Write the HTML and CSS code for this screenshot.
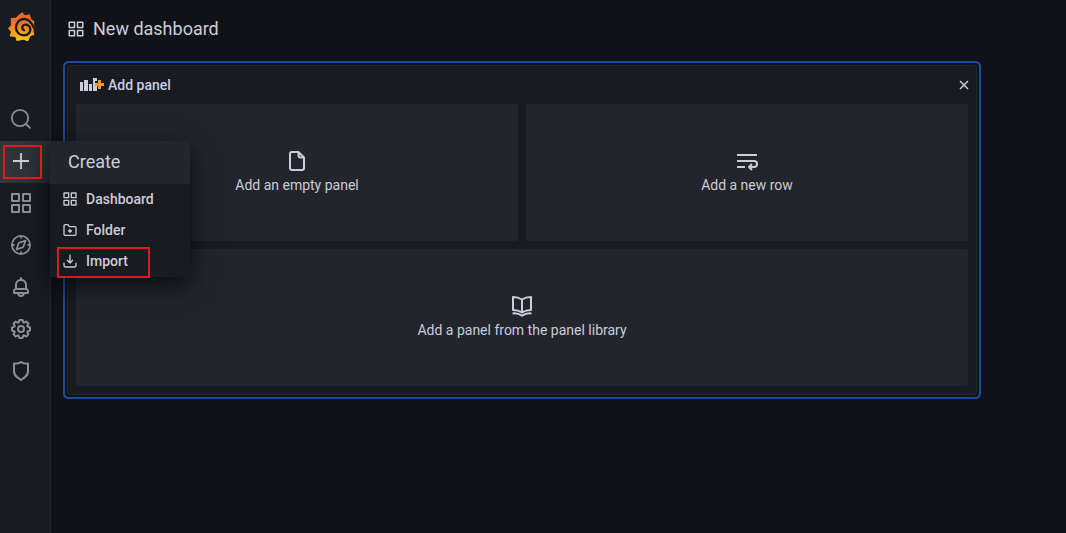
FILE: index.html
```html
<!DOCTYPE html>
<html lang="en">
<head>
  <meta charset="UTF-8">
  <meta name="viewport" content="width=device-width, initial-scale=1.0">
  <title>New dashboard</title>
  <link rel="stylesheet" href="styles.css">
</head>
<body>
  <!-- shared icon shapes -->
  <svg class="sprite" aria-hidden="true">
    <symbol id="apps" viewBox="0 0 24 24">
      <path d="M10,13H3a1,1,0,0,0-1,1v7a1,1,0,0,0,1,1h7a1,1,0,0,0,1-1V14A1,1,0,0,0,10,13ZM9,20H4V15H9ZM21,2H14a1,1,0,0,0-1,1v7a1,1,0,0,0,1,1h7a1,1,0,0,0,1-1V3A1,1,0,0,0,21,2ZM20,9H15V4h5Zm1,4H14a1,1,0,0,0-1,1v7a1,1,0,0,0,1,1h7a1,1,0,0,0,1-1V14A1,1,0,0,0,21,13Zm-1,7H15V15h5ZM10,2H3A1,1,0,0,0,2,3v7a1,1,0,0,0,1,1h7a1,1,0,0,0,1-1V3A1,1,0,0,0,10,2ZM9,9H4V4H9Z"/>
    </symbol>
  </svg>

  <div class="app">
    <nav class="sidebar">
      <a class="logo" href="#" aria-label="Home">
        <svg viewBox="0 0 84 90">
          <defs>
            <linearGradient id="flame" x1="0" y1="0" x2="0" y2="1">
              <stop offset="0" stop-color="#f05a28"/>
              <stop offset="0.4" stop-color="#f5762b"/>
              <stop offset="1" stop-color="#fbca0a"/>
            </linearGradient>
          </defs>
          <path fill="url(#flame)" d="M43 1 L51 10 L66 7 L69 20 L80 29 L77 37 L82 46 L76 56 L79 68 L67 73 L60 88 L46 83 L26 87 L22 75 L5 73 L9 59 L0 49 L9 40 L8 18 L24 17 L32 8 Z"/>
          <path class="swirl" d="M84 54 C74 50 74 23 50 21 C34 20 24 33 24 47 C24 61 35 70 48 70 C60 70 68 61 67 51 C66 42 58 37 51 38 C44 39 41 46 44 51 C46 54 49 55 51 54"/>
        </svg>
      </a>

      <ul class="nav-list">
        <li>
          <a class="nav-link" href="#" aria-label="Search">
            <svg class="icon-lg" viewBox="0 0 24 24"><g class="line"><circle cx="11" cy="11" r="8.2"/><path d="M17 17l4.4 4.4"/></g></svg>
          </a>
        </li>
        <li class="active">
          <a class="nav-link" href="#" aria-label="Create">
            <svg class="icon-lg" viewBox="0 0 24 24"><path class="line" d="M12 4v16M4 12h16"/></svg>
          </a>
          <span class="marker marker-plus"></span>
          <div class="menu">
            <a class="menu-header" href="#">Create</a>
            <a class="menu-item" href="#"><svg class="icon-sm"><use href="#apps"/></svg>Dashboard</a>
            <a class="menu-item" href="#">
              <svg class="icon-sm" viewBox="0 0 24 24"><path class="line" d="M3 5.500a1.500 1.500 0 0 1 1.500-1.500H9l2 3h8.500a1.500 1.500 0 0 1 1.500 1.500v10a1.500 1.500 0 0 1-1.500 1.500h-15a1.500 1.500 0 0 1-1.500-1.500zM12 10.500v6M9 13.500h6"/></svg>Folder
            </a>
            <a class="menu-item" href="#">
              <svg class="icon-sm" viewBox="0 0 24 24"><path class="line" d="M12 2.500v12M7.500 10.500l4.500 4.500 4.500-4.500M3 14.500v4a2.500 2.500 0 0 0 2.500 2.500h13a2.500 2.500 0 0 0 2.500-2.500v-4"/></svg>Import
              <span class="marker marker-import"></span>
            </a>
          </div>
        </li>
        <li>
          <a class="nav-link" href="#" aria-label="Dashboards"><svg class="icon-lg"><use href="#apps"/></svg></a>
        </li>
        <li>
          <a class="nav-link" href="#" aria-label="Explore">
            <svg class="icon-lg" viewBox="0 0 24 24"><g class="line"><circle cx="12" cy="12" r="9.100"/><path d="M12 3v2.500M12 18.500V21M3 12h2.500M18.500 12H21M16.500 7.500l-2.300 6.700-6.700 2.300 2.300-6.700z"/></g></svg>
          </a>
        </li>
        <li>
          <a class="nav-link" href="#" aria-label="Alerting">
            <svg class="icon-lg" viewBox="0 0 24 24"><path d="M18,13.180V10a6,6,0,0,0-5-5.910V3a1,1,0,0,0-2,0V4.090A6,6,0,0,0,6,10v3.180A3,3,0,0,0,4,16v2a1,1,0,0,0,1,1H8.140a4,4,0,0,0,7.720,0H19a1,1,0,0,0,1-1V16A3,3,0,0,0,18,13.180ZM8,10a4,4,0,0,1,8,0v3H8Zm4,10a2,2,0,0,1-1.720-1h3.440A2,2,0,0,1,12,20Zm6-3H6V16a1,1,0,0,1,1-1H17a1,1,0,0,1,1,1Z"/></svg>
          </a>
        </li>
        <li>
          <a class="nav-link" href="#" aria-label="Configuration">
            <svg class="icon-lg" viewBox="0 0 24 24"><path d="M21.320,9.550l-1.890-.630.890-1.780A1,1,0,0,0,20.130,6L18,3.870a1,1,0,0,0-1.150-.190l-1.780.890-.630-1.890A1,1,0,0,0,13.500,2h-3a1,1,0,0,0-.950.680L8.920,4.570,7.140,3.680A1,1,0,0,0,6,3.870L3.870,6a1,1,0,0,0-.190,1.150l.890,1.780-1.890.630A1,1,0,0,0,2,10.500v3a1,1,0,0,0,.680.950l1.890.630-.890,1.780A1,1,0,0,0,3.870,18L6,20.130a1,1,0,0,0,1.150.190l1.780-.890.630,1.890a1,1,0,0,0,.950.680h3a1,1,0,0,0,.950-.680l.630-1.890,1.780.890A1,1,0,0,0,18,20.130L20.130,18a1,1,0,0,0,.190-1.150l-.890-1.780,1.890-.630A1,1,0,0,0,22,13.500v-3A1,1,0,0,0,21.320,9.550ZM20,12.780l-1.200.400A2,2,0,0,0,17.640,16l.570,1.140-1.100,1.100L16,17.640a2,2,0,0,0-2.790,1.160l-.400,1.200H11.220l-.400-1.200A2,2,0,0,0,8,17.640l-1.140.570-1.100-1.100L6.360,16A2,2,0,0,0,5.200,13.180L4,12.780V11.220l1.200-.400A2,2,0,0,0,6.360,8L5.790,6.890l1.100-1.100L8,6.360A2,2,0,0,0,10.820,5.200l.400-1.200h1.560l.400,1.200A2,2,0,0,0,16,6.360l1.140-.570,1.100,1.100L17.640,8a2,2,0,0,0,1.160,2.790l1.200.400ZM12,8a4,4,0,1,0,4,4A4,4,0,0,0,12,8Zm0,6a2,2,0,1,1,2-2A2,2,0,0,1,12,14Z"/></svg>
          </a>
        </li>
        <li>
          <a class="nav-link" href="#" aria-label="Server admin">
            <svg class="icon-lg" viewBox="0 0 24 24"><path d="M19.630,3.650a1,1,0,0,0-.840-.200,8,8,0,0,1-6.220-1.270,1,1,0,0,0-1.140,0A8,8,0,0,1,5.210,3.450a1,1,0,0,0-.840.200A1,1,0,0,0,4,4.430v7.450a9,9,0,0,0,3.770,7.330l3.650,2.600a1,1,0,0,0,1.160,0l3.650-2.600A9,9,0,0,0,20,11.880V4.430A1,1,0,0,0,19.630,3.650ZM18,11.880a7,7,0,0,1-2.930,5.700L12,19.770,8.930,17.580A7,7,0,0,1,6,11.880V5.580a10,10,0,0,0,6-1.390,10,10,0,0,0,6,1.390Z"/></svg>
          </a>
        </li>
      </ul>
    </nav>

    <main class="content">
      <header class="toolbar">
        <svg class="icon-title"><use href="#apps"/></svg>
        <h1>New dashboard</h1>
      </header>

      <section class="add-panel">
        <div class="panel-header">
          <svg class="icon-panel" viewBox="0 0 24 16">
            <path d="M0 5h3v9H0zM4 3h4v11H4zM9 7h3v7H9zM13 1h4v3h-2v5h2v5h-4z"/>
            <path class="spark" d="M18 3h3v3h3v3h-3v3h-3V9h-3V6h3z"/>
          </svg>
          <h2>Add panel</h2>
          <button class="close" type="button" aria-label="Close">
            <svg viewBox="0 0 16 16"><path class="line" d="M4 4l8 8M12 4l-8 8"/></svg>
          </button>
        </div>
        <div class="tiles">
          <button class="tile" type="button">
            <svg class="icon-lg" viewBox="0 0 24 24"><path class="line" d="M13.500 3H7a2 2 0 0 0-2 2v14a2 2 0 0 0 2 2h10a2 2 0 0 0 2-2V8.500zM13.500 3v3.500a2 2 0 0 0 2 2H19"/></svg>
            Add an empty panel
          </button>
          <button class="tile" type="button">
            <svg class="icon-lg" viewBox="0 0 24 24"><path class="line" d="M2 6h20M2 12h17a2.500 2.500 0 0 1 0 6h-4M2 18h8M17 15l-3 3 3 3"/></svg>
            Add a new row
          </button>
          <button class="tile tile-wide" type="button">
            <svg class="icon-lg" viewBox="0 0 24 24"><path class="line" d="M12 5.500C9 3.500 6 3 3 3v13c3 0 6 .500 9 2.500 3-2 6-2.500 9-2.500V3c-3 0-6 .500-9 2.500zM12 5.500v13M2.500 19.500c3.500-.500 6.500.200 9.500 2.200 3-2 6-2.700 9.500-2.200"/></svg>
            Add a panel from the panel library
          </button>
        </div>
      </section>
    </main>
  </div>
</body>
</html>
```
FILE: styles.css
```css
* {
  box-sizing: border-box;
}

body {
  margin: 0;
  background: #111217;
  color: #ccccdc;
  font-family: Roboto, "Liberation Sans", sans-serif;
  font-size: 14px;
  line-height: 20px;
}

a {
  color: inherit;
  text-decoration: none;
}

h1,
h2 {
  margin: 0;
  font-weight: 500;
}

svg {
  display: block;
  flex: none;
  fill: currentColor;
}

.sprite {
  position: absolute;
  width: 0;
  height: 0;
}

.line {
  fill: none;
  stroke: currentColor;
  stroke-width: 2;
  stroke-linejoin: round;
}

.icon-sm {
  width: 16px;
  height: 16px;
}

.icon-title {
  width: 18px;
  height: 18px;
}

.icon-lg {
  width: 24px;
  height: 24px;
}

.app {
  display: flex;
  min-height: 100vh;
}

/* sidebar */
.sidebar {
  flex: none;
  width: 51px;
  background: #181b1f;
  border-right: 1px solid #25272c;
}

.logo {
  display: block;
  height: 99px;
  padding: 12px 0 0 8px;
}

.logo svg {
  width: 28px;
  height: 30px;
}

.swirl {
  fill: none;
  stroke: #181b1f;
  stroke-width: 7;
}

.nav-list {
  list-style: none;
  margin: 0;
  padding: 0;
}

.nav-list li {
  position: relative;
}

.nav-link {
  display: flex;
  align-items: center;
  height: 42px;
  padding: 0 0 2px 9px;
  color: #8e8e9b;
}

.nav-link .line {
  stroke-width: 1.8;
}

.active > .nav-link {
  background: linear-gradient(90deg, #33363b, #2b2e33);
  color: #ccccdc;
}

/* create menu */
.menu {
  position: absolute;
  top: 0;
  left: 50px;
  z-index: 1;
  width: 140px;
  background: #181b1f;
  box-shadow: 0 8px 24px rgba(1, 4, 9, 0.75);
}

.menu-header {
  display: block;
  padding: 10px 18px 12px;
  background: #22252b;
  font-size: 18px;
  line-height: 21px;
}

.menu-item {
  position: relative;
  display: flex;
  align-items: center;
  gap: 8px;
  height: 31px;
  padding: 0 0 2px 12px;
  font-weight: 500;
}

.marker {
  position: absolute;
  z-index: 2;
  border: 2px solid #e0191f;
}

.marker-plus {
  inset: 4px 8px 4px 3px;
}

.marker-import {
  inset: 1px 40px -1px 7px;
}

/* dashboard */
.content {
  flex: 1;
  min-width: 0;
  padding: 0 16px;
}

.toolbar {
  display: flex;
  align-items: center;
  gap: 8px;
  height: 65px;
  padding-bottom: 8px;
}

.toolbar h1 {
  font-size: 18px;
  font-weight: 400;
}

.add-panel {
  max-width: 910px;
  padding: 0 8px 8px;
  background: #181b1f;
  border: 1px solid #25272c;
  border-radius: 2px;
  box-shadow: 0 0 0 2px #111217, 0 0 0 4px #1f4b9f;
}

.panel-header {
  display: flex;
  align-items: center;
  gap: 4px;
  height: 38px;
  padding-left: 4px;
}

.panel-header h2 {
  font-size: 14px;
}

.icon-panel {
  width: 24px;
  height: 16px;
}

.spark {
  fill: #f89a2b;
}

.close {
  margin-left: auto;
  padding: 0 4px 0 0;
  background: none;
  border: 0;
  color: inherit;
  cursor: pointer;
}

.close svg {
  width: 16px;
  height: 16px;
  margin-right: -8px;
}

.close .line {
  stroke-width: 1.5;
}

.tiles {
  display: grid;
  grid-template-columns: 1fr 1fr;
  gap: 8px;
}

.tile {
  display: flex;
  flex-direction: column;
  align-items: center;
  justify-content: center;
  gap: 2px;
  min-height: 137px;
  padding: 0 0 2px;
  background: #22252b;
  border: 0;
  border-radius: 2px;
  color: inherit;
  font: inherit;
  cursor: pointer;
}

.tile-wide {
  grid-column: span 2;
}
```
